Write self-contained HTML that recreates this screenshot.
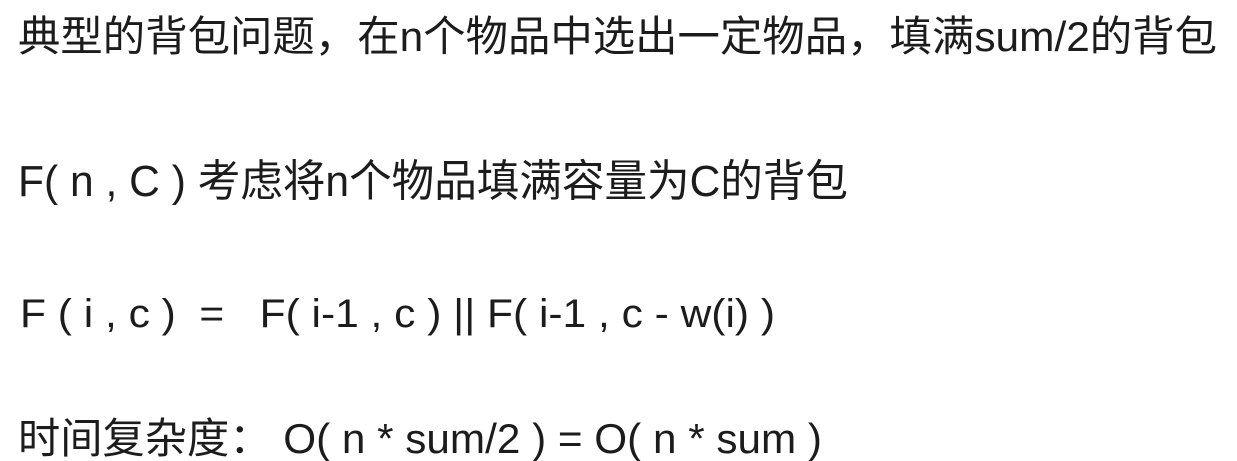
<!DOCTYPE html>
<html><head><meta charset="utf-8"><style>
html,body{margin:0;padding:0;background:#fff;width:1237px;height:461px;overflow:hidden}
svg{display:block}
text{font-family:"Liberation Sans","Noto Sans CJK SC",sans-serif;fill:#1c1c1c;white-space:pre}
</style></head><body>
<svg width="1237" height="461" viewBox="0 0 1237 461" xml:space="preserve">
<text x="18" y="51" font-size="42" textLength="1199" lengthAdjust="spacingAndGlyphs">典型的背包问题，在n个物品中选出一定物品，填满sum/2的背包</text>
<text x="18" y="196" font-size="44" textLength="830" lengthAdjust="spacingAndGlyphs">F( n , C ) 考虑将n个物品填满容量为C的背包</text>
<text x="20" y="327" font-size="40" textLength="755" lengthAdjust="spacingAndGlyphs">F ( i , c )  =   F( i-1 , c ) || F( i-1 , c - w(i) )</text>
<text x="18" y="453" font-size="42" textLength="804" lengthAdjust="spacingAndGlyphs">时间复杂度： O( n * sum/2 ) = O( n * sum )</text>
</svg>
</body></html>
